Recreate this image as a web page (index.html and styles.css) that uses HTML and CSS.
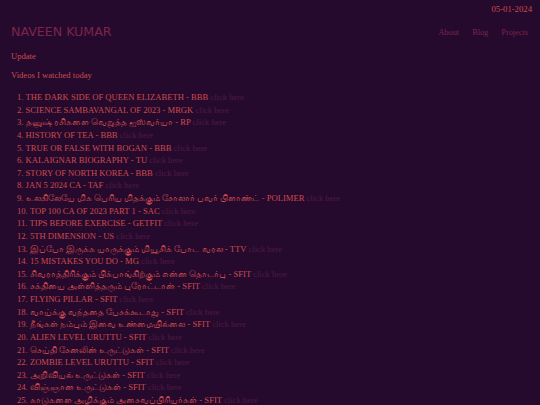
FILE: index.html
```html
<!DOCTYPE html>
<html lang="en">
<head>
<meta charset="utf-8">
<title>Naveen Kumar</title>
<link rel="stylesheet" href="styles.css">
</head>
<body>
<div class="page">
  <div class="date">05-01-2024</div>
  <header class="header">
    <h1 class="name">NAVEEN KUMAR</h1>
    <nav class="nav">
      <a href="#">About</a>
      <a href="#">Blog</a>
      <a href="#">Projects</a>
    </nav>
  </header>
  <p class="label first">Update</p>
  <p class="label">Videos I watched today</p>
  <ol class="videos">
    <li>THE DARK SIDE OF QUEEN ELIZABETH - BBB <a href="#">click here</a></li>
    <li>SCIENCE SAMBAVANGAL OF 2023 - MRGK <a href="#">click here</a></li>
    <li>தனுஷ் ரசிகளை வெறுத்த ஐஸ்வர்யா - RP <a href="#">click here</a></li>
    <li>HISTORY OF TEA - BBB <a href="#">click here</a></li>
    <li>TRUE OR FALSE WITH BOGAN - BBB <a href="#">click here</a></li>
    <li>KALAIGNAR BIOGRAPHY - TU <a href="#">click here</a></li>
    <li>STORY OF NORTH KOREA - BBB <a href="#">click here</a></li>
    <li>JAN 5 2024 CA - TAF <a href="#">click here</a></li>
    <li>உலகிலேயே மிக பெரிய மிதக்கும் சோலார் பவர் பிளாண்ட் - POLIMER <a href="#">click here</a></li>
    <li>TOP 100 CA OF 2023 PART 1 - SAC <a href="#">click here</a></li>
    <li>TIPS BEFORE EXERCISE - GETFIT <a href="#">click here</a></li>
    <li>5TH DIMENSION - US <a href="#">click here</a></li>
    <li>இப்போ இருக்க யாருக்கும் மியூசிக் போட வரல - TTV <a href="#">click here</a></li>
    <li>15 MISTAKES YOU DO - MG <a href="#">click here</a></li>
    <li>சிவராத்திரிக்கும் பிக்பாங்கிற்கும் என்ன தொடர்பு - SFIT <a href="#">click here</a></li>
    <li>சக்தியை அள்ளித்தரும் புரோட்டான் - SFIT <a href="#">click here</a></li>
    <li>FLYING PILLAR - SFIT <a href="#">click here</a></li>
    <li>வாய்க்கு வந்ததை பேசக்கூடாது - SFIT <a href="#">click here</a></li>
    <li>நீங்கள் நம்பும் இவை உண்மையில்லை - SFIT <a href="#">click here</a></li>
    <li>ALIEN LEVEL URUTTU - SFIT <a href="#">click here</a></li>
    <li>செய்தி சேனலின் உருட்டுகள் - SFIT <a href="#">click here</a></li>
    <li>ZOMBIE LEVEL URUTTU - SFIT <a href="#">click here</a></li>
    <li>அறிவியல் உருட்டுகள் - SFIT <a href="#">click here</a></li>
    <li>விஞ்ஞான உருட்டுகள் - SFIT <a href="#">click here</a></li>
    <li>காடுகளை அழிக்கும் அசைவப்பிரியர்கள் - SFIT <a href="#">click here</a></li>
  </ol>
</div>
</body>
</html>
```
FILE: styles.css
```css
html, body {
  margin: 0;
  padding: 0;
  background: #260a2e;
}
body {
  font-family: "Liberation Serif", "Times New Roman", serif;
  color: #cc4a4c;
  font-size: 8.6px;
}
.page {
  padding: 3px 8px 0 11px;
}
.date {
  text-align: right;
  font-size: 8.7px;
  line-height: 12px;
}
.header {
  display: flex;
  justify-content: space-between;
  align-items: center;
  margin-top: 9px;
}
.name {
  margin: 0;
  font-family: "DejaVu Sans", sans-serif;
  font-weight: normal;
  font-size: 12.6px;
  line-height: 16px;
  color: #7c2449;
}
.nav {
  display: flex;
  gap: 13px;
  padding-right: 4px;
}
.nav a {
  color: #7c2449;
  text-decoration: none;
  font-size: 8.3px;
}
.label {
  margin: 7px 0 0;
  line-height: 12px;
}
.label.first {
  margin-top: 10px;
}
.videos {
  margin: 10px 0 0;
  padding-left: 6px;
  list-style-position: inside;
  line-height: 12.63px;
}
.videos a {
  color: #4e1a42;
  text-decoration: none;
}
```
